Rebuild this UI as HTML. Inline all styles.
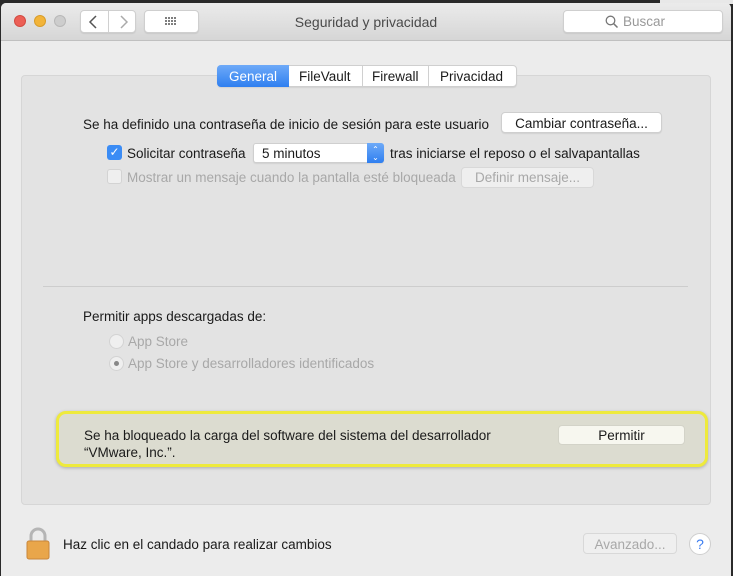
<!DOCTYPE html>
<html><head><style>
*{margin:0;padding:0;box-sizing:border-box}
body{width:733px;height:576px;overflow:hidden;background:#2a2a2a;font-family:"Liberation Sans",Arial,sans-serif;font-size:13.5px;color:#1a1a1a;position:relative}
.abs{position:absolute}
.win{left:1px;top:3px;width:730px;height:573px;background:#ececec;border-radius:5px 5px 0 0;overflow:hidden}
.tb{left:0;top:0;width:730px;height:38px;background:linear-gradient(#ebebeb,#d6d6d6);border-bottom:1px solid #c0c0c0}
.dot{width:12px;height:12px;border-radius:50%;top:12px}
.btn{background:#fff;border:1px solid #cfcfcf;border-radius:4px;box-shadow:0 1px 1px rgba(0,0,0,.08)}
.panel{left:20px;top:72px;width:690px;height:430px;background:#e3e3e3;border:1px solid #d6d6d6;border-radius:4px}
.t{white-space:nowrap}
.dis{color:#a8a8a8}
</style></head><body>
<div class="abs" style="left:660px;top:0;width:73px;height:4px;background:#e8e8e8"></div>
<div class="abs win">
 <div class="abs tb"></div>
 <div class="abs dot" style="left:13px;background:#ec5f56;border:1px solid #d24b42"></div>
 <div class="abs dot" style="left:33px;background:#f2b43a;border:1px solid #d89d2a"></div>
 <div class="abs dot" style="left:53px;background:#cdcdcd;border:1px solid #b8b8b8"></div>
 <div class="abs btn" style="left:79px;top:7px;width:56px;height:23px"></div>
 <div class="abs" style="left:107px;top:8px;width:1px;height:21px;background:#d0d0d0"></div>
 <svg class="abs" style="left:85px;top:11px" width="46" height="16"><path d="M10 2 L4 8 L10 14" fill="none" stroke="#555" stroke-width="1.5"/><path d="M35 2 L41 8 L35 14" fill="none" stroke="#aaa" stroke-width="1.5"/></svg>
 <div class="abs btn" style="left:143px;top:7px;width:55px;height:23px"></div>
 <svg class="abs" style="left:163px;top:13px" width="14" height="11" fill="#555"><circle cx="2" cy="2" r="1"/><circle cx="5" cy="2" r="1"/><circle cx="8" cy="2" r="1"/><circle cx="11" cy="2" r="1"/><circle cx="2" cy="5" r="1"/><circle cx="5" cy="5" r="1"/><circle cx="8" cy="5" r="1"/><circle cx="11" cy="5" r="1"/><circle cx="2" cy="8" r="1"/><circle cx="5" cy="8" r="1"/><circle cx="8" cy="8" r="1"/><circle cx="11" cy="8" r="1"/></svg>
 <div class="abs t" style="left:0;width:730px;top:11px;text-align:center;color:#4a4a4a;font-size:14px">Seguridad y privacidad</div>
 <div class="abs btn" style="left:562px;top:7px;width:160px;height:23px"></div>
 <svg class="abs" style="left:604px;top:12px" width="14" height="14"><circle cx="5.5" cy="5.5" r="4.3" fill="none" stroke="#777" stroke-width="1.3"/><path d="M8.7 8.7 L12.5 12.5" stroke="#777" stroke-width="1.5"/></svg>
 <div class="abs t" style="left:622px;top:11px;color:#999">Buscar</div>

 <div class="abs panel"></div>
 <div class="abs btn" style="left:216px;top:62px;width:300px;height:22px;border-radius:4px"></div>
 <div class="abs" style="left:216px;top:62px;width:72px;height:22px;background:linear-gradient(#6eaaf8,#2f7ff0);border-radius:4px 0 0 4px"></div>
 <div class="abs t" style="left:216px;width:72px;top:66px;text-align:center;color:#fff">General</div>
 <div class="abs" style="left:361px;top:63px;width:1px;height:20px;background:#d0d0d0"></div>
 <div class="abs" style="left:427px;top:63px;width:1px;height:20px;background:#d0d0d0"></div>
 <div class="abs t" style="left:298px;top:66px">FileVault</div>
 <div class="abs t" style="left:371px;top:66px">Firewall</div>
 <div class="abs t" style="left:439px;top:66px">Privacidad</div>

 <div class="abs t" style="left:82px;top:114px">Se ha definido una contraseña de inicio de sesión para este usuario</div>
 <div class="abs btn" style="left:500px;top:109px;width:161px;height:21px"></div>
 <div class="abs t" style="left:500px;width:161px;text-align:center;top:113px">Cambiar contraseña...</div>

 <div class="abs" style="left:106px;top:142px;width:15px;height:15px;background:#3b8cf5;border-radius:3px;color:#fff;font-size:12px;line-height:15px;text-align:center">✓</div>
 <div class="abs t" style="left:126px;top:143px">Solicitar contraseña</div>
 <div class="abs btn" style="left:252px;top:140px;width:131px;height:20px;border-radius:3px"></div>
 <div class="abs" style="left:366px;top:140px;width:17px;height:20px;background:linear-gradient(#6eaaf8,#2f7ff0);border-radius:0 3px 3px 0;color:#fff;font-size:8px;line-height:8px;text-align:center;padding-top:3px">⌃<br>⌄</div>
 <div class="abs t" style="left:261px;top:143px">5 minutos</div>
 <div class="abs t" style="left:389px;top:143px">tras iniciarse el reposo o el salvapantallas</div>

 <div class="abs" style="left:106px;top:166px;width:15px;height:15px;background:#efefef;border:1px solid #d3d3d3;border-radius:3px"></div>
 <div class="abs t dis" style="left:126px;top:167px">Mostrar un mensaje cuando la pantalla esté bloqueada</div>
 <div class="abs" style="left:460px;top:164px;width:133px;height:21px;background:#efefef;border:1px solid #d8d8d8;border-radius:4px"></div>
 <div class="abs t dis" style="left:460px;width:133px;text-align:center;top:167px">Definir mensaje...</div>

 <div class="abs" style="left:42px;top:283px;width:645px;height:1px;background:#cdcdcd"></div>
 <div class="abs t" style="left:82px;top:306px">Permitir apps descargadas de:</div>
 <div class="abs" style="left:108px;top:331px;width:15px;height:15px;border-radius:50%;background:#efefef;border:1px solid #d3d3d3"></div>
 <div class="abs t dis" style="left:127px;top:331px">App Store</div>
 <div class="abs" style="left:108px;top:353px;width:15px;height:15px;border-radius:50%;background:#efefef;border:1px solid #d3d3d3"></div>
 <div class="abs" style="left:113px;top:358px;width:5px;height:5px;border-radius:50%;background:#888"></div>
 <div class="abs t dis" style="left:127px;top:353px">App Store y desarrolladores identificados</div>

 <div class="abs" style="left:55px;top:408px;width:652px;height:56px;background:#dcdcd0;border:3px solid #eeea3c;border-radius:10px;box-shadow:0 1px 3px rgba(0,0,0,.25)"></div>
 <div class="abs t" style="left:83px;top:425px">Se ha bloqueado la carga del software del sistema del desarrollador</div>
 <div class="abs t" style="left:83px;top:442px">“VMware, Inc.”.</div>
 <div class="abs" style="left:557px;top:422px;width:127px;height:20px;background:#f7f7ef;border:1px solid #d3d3c8;border-radius:4px"></div>
 <div class="abs t" style="left:557px;width:127px;text-align:center;top:425px">Permitir</div>

 <svg class="abs" style="left:24px;top:524px" width="26" height="34"><path d="M6 14 V9 A7 7 0 0 1 20 9 V14" fill="none" stroke="#b5b5b5" stroke-width="3"/><rect x="2" y="14" width="22" height="18" rx="2" fill="#e9a64a" stroke="#c9863a"/></svg>
 <div class="abs t" style="left:62px;top:534px">Haz clic en el candado para realizar cambios</div>
 <div class="abs" style="left:582px;top:530px;width:94px;height:21px;background:#efefef;border:1px solid #d8d8d8;border-radius:4px"></div>
 <div class="abs t dis" style="left:582px;width:94px;text-align:center;top:534px">Avanzado...</div>
 <div class="abs" style="left:688px;top:530px;width:22px;height:22px;border-radius:50%;background:#fff;border:1px solid #cfcfcf;color:#3b7cf0;text-align:center;line-height:20px;font-size:14px">?</div>
</div>
</body></html>
